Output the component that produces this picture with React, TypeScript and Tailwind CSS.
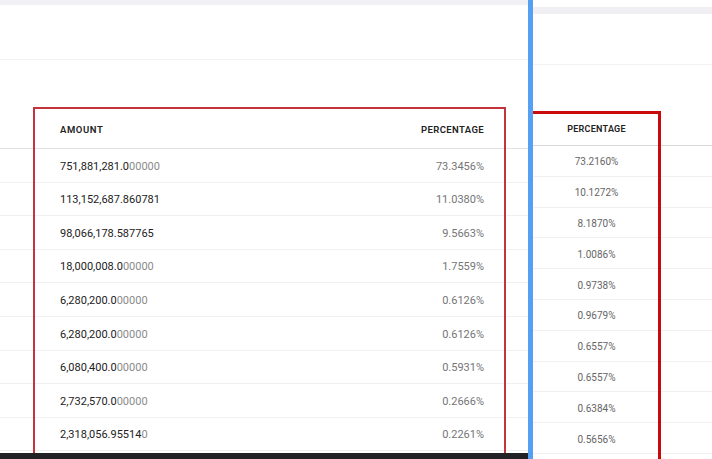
const ROBOTO = { fontFamily: 'Roboto, "Noto Sans", sans-serif' }

const leftRows = [
  { strong: '751,881,281.0', faint: '00000', pct: '73.3456%' },
  { strong: '113,152,687.860781', faint: '', pct: '11.0380%' },
  { strong: '98,066,178.587765', faint: '', pct: '9.5663%' },
  { strong: '18,000,008.0', faint: '00000', pct: '1.7559%' },
  { strong: '6,280,200.0', faint: '00000', pct: '0.6126%' },
  { strong: '6,280,200.0', faint: '00000', pct: '0.6126%' },
  { strong: '6,080,400.0', faint: '00000', pct: '0.5931%' },
  { strong: '2,732,570.0', faint: '00000', pct: '0.2666%' },
  { strong: '2,318,056.95514', faint: '0', pct: '0.2261%' },
]

const rightRows = [
  '73.2160%',
  '10.1272%',
  '8.1870%',
  '1.0086%',
  '0.9738%',
  '0.9679%',
  '0.6557%',
  '0.6557%',
  '0.6384%',
  '0.5656%',
]

function LeftPane() {
  return (
    <div className="w-[528px] h-full flex flex-col bg-white overflow-hidden">
      <div className="h-[5px] bg-[#f1f1f5] shrink-0" />
      <div className="h-[55px] border-b border-[#f2f2f4] shrink-0" />
      <div className="h-[47px] shrink-0" />

      {/* table */}
      <div className="relative flex-1 overflow-hidden">
        <div className="h-[42px] flex items-center justify-between pt-[5px] pl-[60px] pr-[44px] border-b border-[#e2e2e6]">
          <span className="text-[9.5px] font-semibold tracking-[0.06em] text-[#222]">AMOUNT</span>
          <span className="text-[9.5px] font-semibold tracking-[0.04em] text-[#222]">PERCENTAGE</span>
        </div>
        {leftRows.map((r, i) => (
          <div
            key={i}
            className="h-[33.6px] flex items-center justify-between pt-[3px] pl-[60px] pr-[44px] border-b border-[#f0f0f2]"
          >
            <span className="text-[11px] text-[#222]">
              {r.strong}
              <span className="text-[#8a8a8a]">{r.faint}</span>
            </span>
            <span className="text-[11px] text-[#757575]">{r.pct}</span>
          </div>
        ))}

        {/* annotation box */}
        <div className="absolute left-[33px] top-0 w-[473px] h-[400px] border-2 border-[#c4343c] pointer-events-none" />
      </div>

      <div className="h-[6px] bg-[#222226] shrink-0" />
    </div>
  )
}

function RightPane() {
  return (
    <div className="flex-1 h-full flex flex-col bg-white overflow-hidden">
      <div className="h-[7px] shrink-0" />
      <div className="h-[7px] bg-[#f0f0f4] shrink-0" />
      <div className="h-[51px] border-b border-[#f2f2f4] shrink-0" />
      <div className="h-[46px] shrink-0" />

      <div className="relative flex-1 overflow-hidden">
        <div className="h-[35px] flex items-center pt-[4px] border-b border-[#d8d8dc]">
          <span className="w-[127px] text-center text-[9px] font-semibold tracking-[0.03em] text-[#222]">
            PERCENTAGE
          </span>
        </div>
        {rightRows.map((p, i) => (
          <div key={i} className="h-[30.8px] flex items-center pt-[2px] border-b border-[#f0f0f2]">
            <span className="w-[127px] text-center text-[10px] text-[#666]">{p}</span>
          </div>
        ))}

        <div className="absolute left-0 top-0 w-[128px] h-[400px] border-[3px] border-l-0 border-[#c80a0a] pointer-events-none" />
      </div>
    </div>
  )
}

export default function App() {
  return (
    <div className="w-[712px] h-[459px] flex bg-white" style={ROBOTO}>
      <LeftPane />
      <div className="w-[5px] h-full bg-[#55a0f2] shrink-0" />
      <RightPane />
    </div>
  )
}
